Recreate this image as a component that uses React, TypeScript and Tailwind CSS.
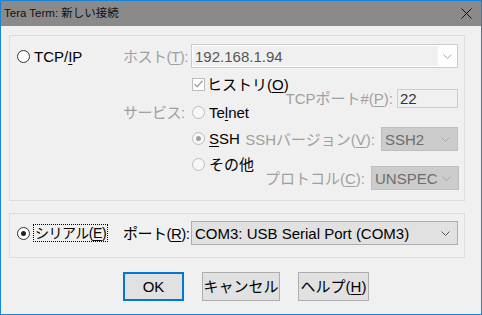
import React from "react";

const Chevron = ({ color = "#888888" }: { color?: string }) => (
  <svg width="9" height="5" viewBox="0 0 9 5">
    <polyline points="0.5,0.5 4.5,4.5 8.5,0.5" fill="none" stroke={color} strokeWidth="1" />
  </svg>
);

const Radio = ({ checked, disabled }: { checked?: boolean; disabled?: boolean }) => (
  <span
    className={`w-[13px] h-[13px] rounded-full border flex items-center justify-center shrink-0 ${
      disabled ? "border-[#bcbcbc] bg-[#f7f7f7]" : "border-[#333333] bg-white"
    }`}
  >
    {checked && (
      <span className={`w-[5px] h-[5px] rounded-full ${disabled ? "bg-[#a0a0a0]" : "bg-[#222222]"}`} />
    )}
  </span>
);

const Checkbox = () => (
  <span className="w-[13px] h-[13px] border border-[#bcbcbc] bg-white flex items-center justify-center shrink-0">
    <svg width="9" height="8" viewBox="0 0 9 8">
      <polyline points="0.5,4 3.2,6.7 8.5,0.8" fill="none" stroke="#a0a0a0" strokeWidth="1.3" />
    </svg>
  </span>
);

const U = ({ children }: { children: React.ReactNode }) => (
  <u className="underline decoration-1 underline-offset-2">{children}</u>
);

export default function App() {
  return (
    <div className="w-[482px] h-[315px] border border-[#1883d7] bg-[#f0f0f0] flex flex-col overflow-hidden whitespace-nowrap font-['Liberation_Sans','Noto_Sans_CJK_JP',sans-serif] text-[15px] leading-none text-black">
      {/* title bar */}
      <div className="h-[25px] shrink-0 bg-[#8a8a8a] flex items-center justify-between pl-[3px] pr-[9px]">
        <span className="text-[11.5px] text-[#111111]">Tera Term: 新しい接続</span>
        <svg width="11" height="11" viewBox="0 0 11 11">
          <path d="M0.5 0.5 L10.5 10.5 M10.5 0.5 L0.5 10.5" stroke="#111111" strokeWidth="1" />
        </svg>
      </div>

      {/* TCP/IP group */}
      <div className="ml-[8px] mt-[9px] w-[456px] h-[166px] shrink-0 border border-[#dcdcdc] flex">
        <div className="w-[113px] shrink-0 pl-[7px] pt-[8px]">
          <div className="h-[24px] flex items-center gap-[4px]">
            <Radio />
            <span>
              TCP/<U>I</U>P
            </span>
          </div>
        </div>

        <div className="flex-1 min-w-0 flex flex-col pt-[8px] pr-[6px]">
          <div className="h-[24px] flex items-center">
            <span className="w-[68px] shrink-0 text-[#a0a0a0] tracking-[-0.5px]">
              ホスト(<U>T</U>):
            </span>
            <div className="w-[267px] shrink-0 h-[24px] border border-[#cccccc] bg-white p-[1px] flex">
              <div className="flex-1 bg-[#f0f0f0] flex items-center pl-[2px] text-[#555555]">192.168.1.94</div>
              <div className="w-[18px] flex items-center justify-center">
                <Chevron color="#a8a8a8" />
              </div>
            </div>
          </div>

          <div className="flex">
            <div className="w-[69px] shrink-0 pt-[31px]">
              <div className="h-[26px] flex items-center text-[#a0a0a0] tracking-[-0.5px]">サービス:</div>
            </div>

            <div className="flex flex-col shrink-0 pt-[9px]">
              <div className="h-[14px] flex items-center gap-[2px]">
                <Checkbox />
                <span>
                  ヒストリ(<U>O</U>)
                </span>
              </div>
              <div className="mt-[8px] flex flex-col">
                <div className="h-[26px] flex items-center gap-[4px]">
                  <Radio disabled />
                  <span>
                    Te<U>l</U>net
                  </span>
                </div>
                <div className="h-[26px] flex items-center gap-[4px]">
                  <Radio disabled checked />
                  <span>
                    <U>S</U>SH
                  </span>
                </div>
                <div className="h-[27px] flex items-center gap-[4px]">
                  <Radio disabled />
                  <span>その他</span>
                </div>
              </div>
            </div>

            <div className="flex-1 min-w-0 flex flex-col items-end pt-[21px]">
              <div className="flex items-center gap-[4px]">
                <span className="text-[#a0a0a0]">
                  TCPポート#(<U>P</U>):
                </span>
                <div className="w-[61px] shrink-0 h-[19px] border border-[#cccccc] bg-[#f0f0f0] flex items-center pl-[2px] text-[#333333]">
                  22
                </div>
              </div>
              <div className="mt-[19px] flex items-center gap-[6px]">
                <span className="text-[#a0a0a0]">
                  SSHバージョン(<U>V</U>):
                </span>
                <div className="w-[77px] shrink-0 h-[24px] border border-[#bfbfbf] bg-[#cccccc] flex items-center justify-between pl-[3px] pr-[7px] text-[#6d6d6d]">
                  SSH2
                  <Chevron color="#a8a8a8" />
                </div>
              </div>
              <div className="mt-[15px] mr-[-1px] flex items-center gap-[6px]">
                <span className="text-[#a0a0a0]">
                  プロトコル(<U>C</U>):
                </span>
                <div className="w-[88px] shrink-0 h-[24px] border border-[#bfbfbf] bg-[#cccccc] flex items-center justify-between pl-[3px] pr-[7px] text-[#6d6d6d]">
                  UNSPEC
                  <Chevron color="#a8a8a8" />
                </div>
              </div>
            </div>
          </div>
        </div>
      </div>

      {/* Serial group */}
      <div className="ml-[8px] mt-[12px] w-[456px] h-[45px] shrink-0 border border-[#dcdcdc] flex items-start pt-[7px]">
        <div className="w-[113px] shrink-0 pl-[7px] h-[24px] flex items-center gap-[3px]">
          <Radio checked />
          <span className="border border-dotted border-black px-[1px] py-[1px] text-[14px] tracking-[-0.5px]">
            シリアル(<U>E</U>)
          </span>
        </div>
        <div className="h-[24px] flex items-center">
          <span className="w-[68px] shrink-0 tracking-[-0.5px]">
            ポート(<U>R</U>):
          </span>
          <div className="w-[267px] shrink-0 h-[24px] border border-[#adadad] bg-[#e1e1e1] flex items-center justify-between pl-[3px] pr-[7px]">
            COM3: USB Serial Port (COM3)
            <Chevron color="#555555" />
          </div>
        </div>
      </div>

      {/* buttons */}
      <div className="mt-[14px] pl-[122px] flex gap-[18px]">
        <button className="w-[61px] h-[29px] border-2 border-[#0078d7] bg-[#e1e1e1] flex items-center justify-center">
          OK
        </button>
        <button className="w-[78px] h-[29px] border border-[#adadad] bg-[#e1e1e1] flex items-center justify-center">
          キャンセル
        </button>
        <button className="w-[71px] h-[29px] border border-[#adadad] bg-[#e1e1e1] flex items-center justify-center">
          ヘルプ(<U>H</U>)
        </button>
      </div>
    </div>
  );
}
